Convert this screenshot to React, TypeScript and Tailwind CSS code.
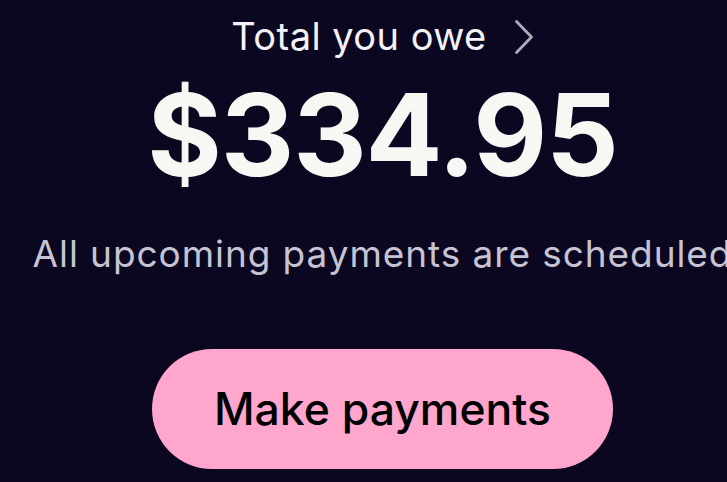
import React from "react";

export default function App() {
  return (
    <div className="w-full h-screen overflow-hidden bg-[#0b0720]" style={{ fontFamily: "Inter, 'Noto Sans', sans-serif" }}>
      <div className="w-[765px] flex flex-col items-center">
        <div className="flex items-center gap-[27px] mt-[11px] h-[50px]">
          <span className="text-[38px] leading-none text-[#f4f2f7] tracking-[0.012em]">Total you owe</span>
          <svg width="20" height="36" viewBox="0 0 20 36" fill="none" className="mt-[2px]">
            <path d="M2.5 2.5 L17.5 18 L2.5 33.5" stroke="#aeabb9" strokeWidth="2.8" strokeLinecap="round" strokeLinejoin="round" />
          </svg>
        </div>
        <div className="mt-[17px] text-[114px] leading-none font-bold text-[#f8f7f4] tracking-[-0.01em]">$334.95</div>
        <div className="mt-[43px] text-[37px] leading-none text-[#c6c3d3] whitespace-nowrap tracking-[0.025em]">
          All upcoming payments are scheduled
        </div>
        <button className="mt-[77px] w-[461px] h-[120px] rounded-full bg-[#ffa6cc] text-black text-[44.5px] font-medium leading-none">
          Make payments
        </button>
      </div>
    </div>
  );
}
